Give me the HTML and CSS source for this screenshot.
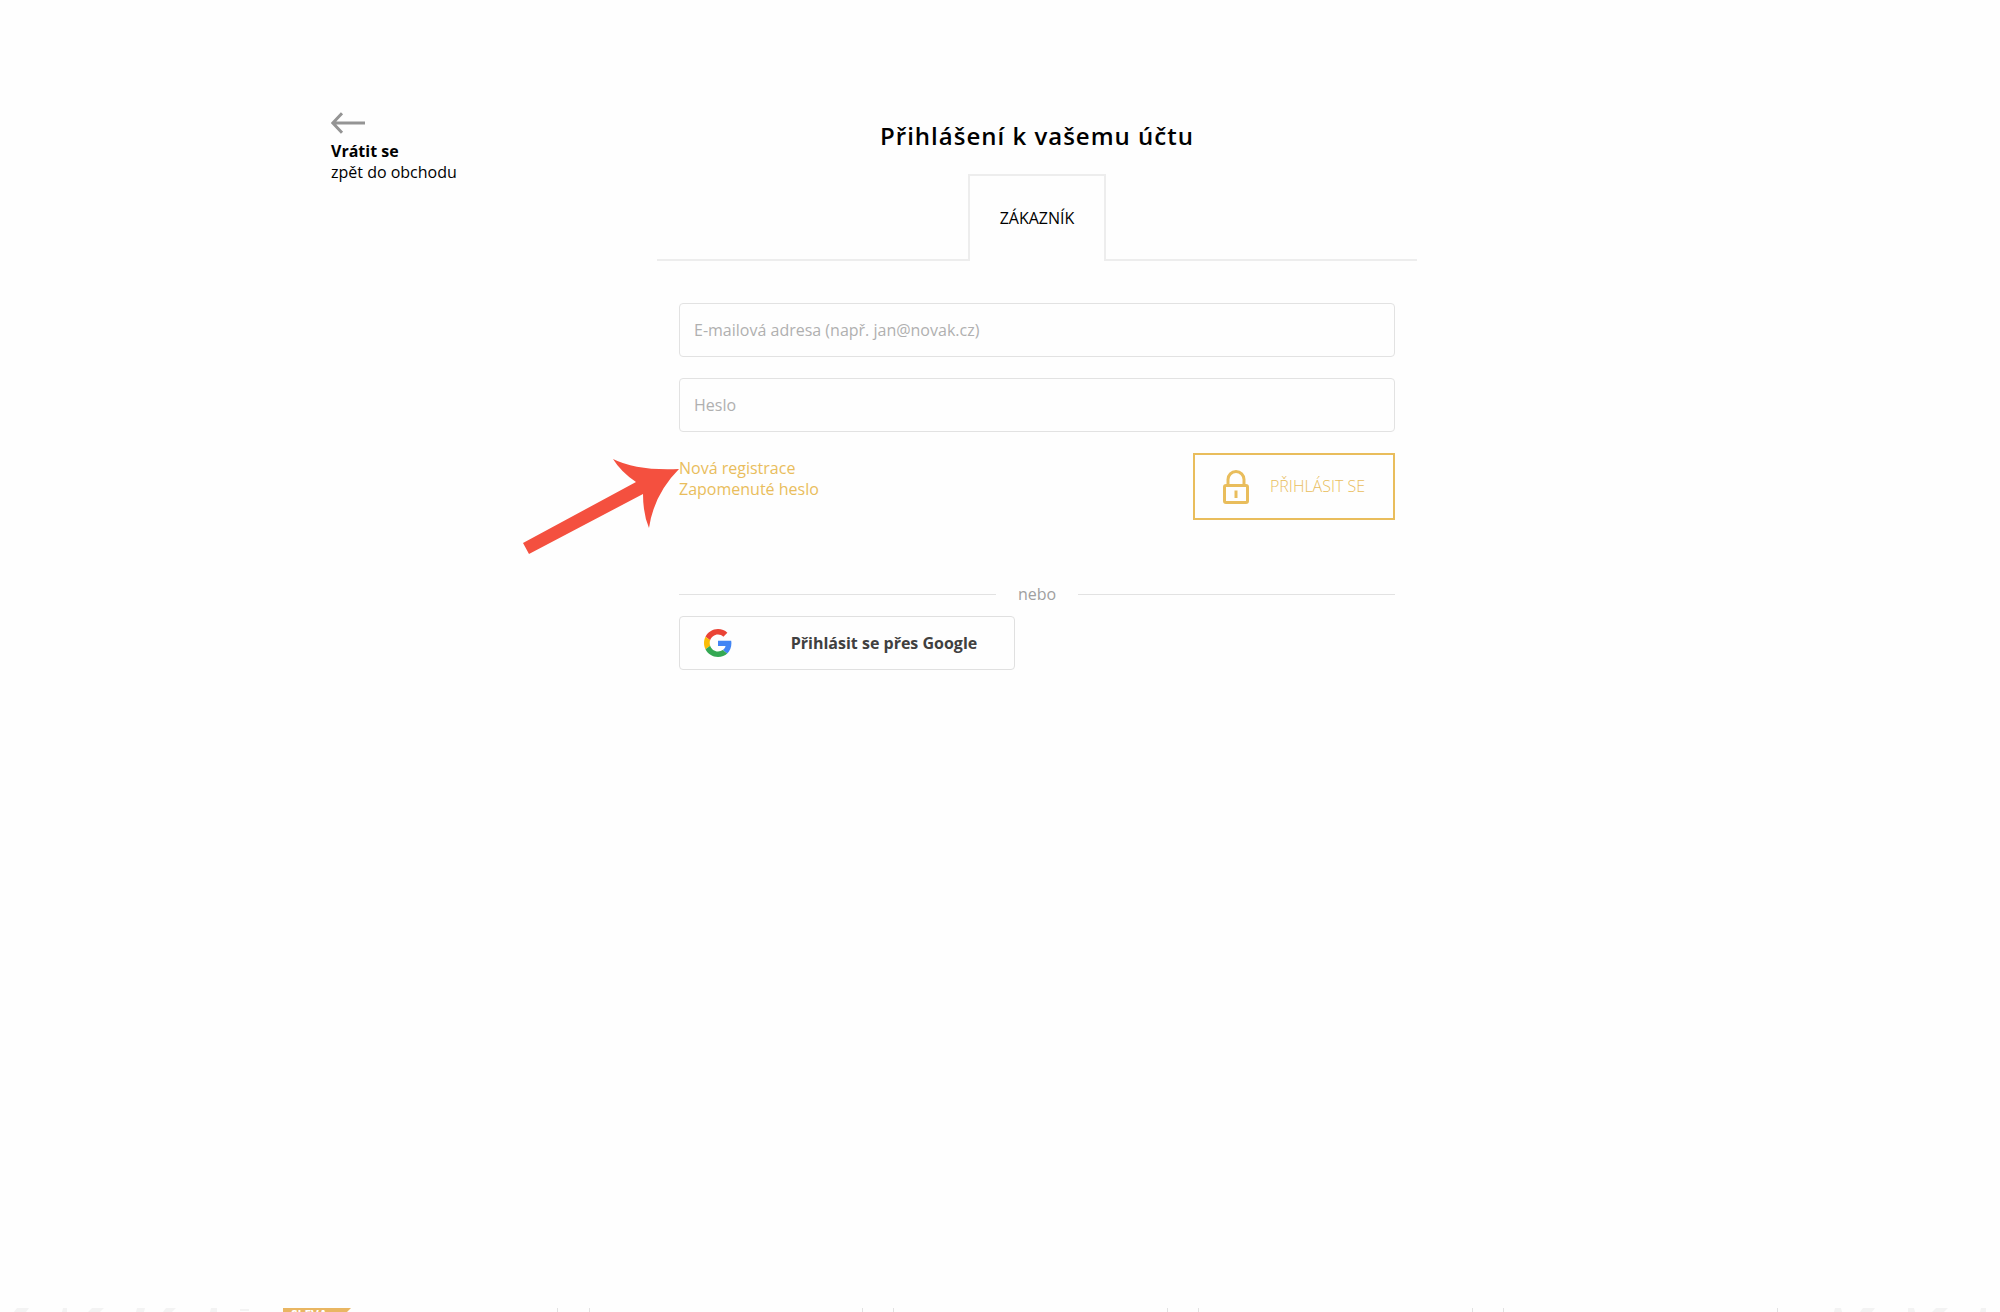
FILE: index.html
```html
<!DOCTYPE html>
<html lang="cs">
<head>
<meta charset="utf-8">
<meta name="viewport" content="width=device-width, initial-scale=1">
<title>Přihlášení k vašemu účtu</title>
<link rel="stylesheet" href="styles.css">
</head>
<body>
<div class="page">
  <a class="back" href="#">
    <svg class="back-icon" width="34" height="22" viewBox="0 0 34 22" fill="none" stroke="#949494" stroke-width="3" aria-hidden="true"><path d="M11 1.2 1.8 11 11 20.8M2 11h32"/></svg>
    <strong>Vrátit se</strong>
    <span>zpět do obchodu</span>
  </a>
  <main class="login">
    <h1 class="title">Přihlášení k vašemu účtu</h1>
    <div class="tabs">
      <button class="tab" type="button">ZÁKAZNÍK</button>
    </div>
    <form class="form">
      <input class="field" type="email" aria-label="E-mailová adresa" placeholder="E-mailová adresa (např. jan@novak.cz)">
      <input class="field" type="password" aria-label="Heslo" placeholder="Heslo">
      <div class="actions">
        <div class="links">
          <a href="#">Nová registrace</a>
          <a href="#">Zapomenuté heslo</a>
          <svg class="pointer" width="158" height="98" viewBox="0 0 158 98" fill="#f4503f" aria-hidden="true"><path d="M91 2Q115 14 157 12Q132 37 127 71Q121 57 121 37L7 97 1 86 114 25Q99 15 91 2Z"/></svg>
        </div>
        <button class="submit" type="submit">
          <svg width="26" height="34" viewBox="0 0 26 34" fill="none" stroke="#e9bd5c" stroke-width="3" aria-hidden="true"><rect x="1.5" y="15.5" width="23" height="17" rx="1.5"/><path d="M5 15.5V9.5a8 8 0 0 1 16 0v6M13 20.5v7.500"/></svg>
          <span>PŘIHLÁSIT SE</span>
        </button>
      </div>
      <div class="divider">nebo</div>
      <button class="google" type="button">
        <svg width="28" height="28" viewBox="0 0 48 48" aria-hidden="true"><path fill="#EA4335" d="M24 9.5c3.54 0 6.71 1.22 9.21 3.6l6.85-6.85C35.9 2.38 30.47 0 24 0 14.62 0 6.51 5.38 2.56 13.22l7.98 6.19C12.43 13.72 17.74 9.5 24 9.5z"/><path fill="#4285F4" d="M46.98 24.55c0-1.57-.15-3.09-.38-4.55H24v9.02h12.94c-.58 2.96-2.26 5.48-4.78 7.18l7.73 6c4.51-4.18 7.09-10.36 7.09-17.65z"/><path fill="#FBBC05" d="M10.53 28.59c-.48-1.45-.76-2.99-.76-4.59s.27-3.14.76-4.59l-7.98-6.19C.92 16.46 0 20.12 0 24c0 3.88.92 7.54 2.56 10.78l7.97-6.19z"/><path fill="#34A853" d="M24 48c6.48 0 11.93-2.13 15.89-5.81l-7.73-6c-2.15 1.45-4.92 2.3-8.16 2.3-6.26 0-11.57-4.22-13.47-9.91l-7.98 6.19C6.51 42.62 14.62 48 24 48z"/></svg>
        <span>Přihlásit se přes Google</span>
      </button>
    </form>
  </main>
</div>
<footer class="strip">
  <svg class="marks" width="260" height="4" viewBox="0 0 260 4" fill="#f3f3f3" aria-hidden="true"><path d="M17 0h12l-3 4H14zM63 0h4v4h-5zM92 0h12l-4 4H88zM137 0h8l-1 4h-8zM166 0h10l-4 4h-9zM211 0h6v4h-7zM240 1h9v2h-9z"/></svg>
  <span class="badge">SLEVA</span>
  <svg class="ticks" viewBox="0 0 1280 4" preserveAspectRatio="xMinYMin slice" fill="#e2e2e2" aria-hidden="true"><path d="M7 0h1v4H7zM39 0h1v4h-1zM312 0h1v4h-1zM343 0h1v4h-1zM617 0h1v4h-1zM648 0h1v4h-1zM922 0h1v4h-1zM953 0h1v4h-1zM1227 0h1v4h-1z"/></svg>
  <svg class="marks" width="170" height="4" viewBox="0 0 170 4" fill="#f3f3f3" aria-hidden="true"><path d="M5 0h6l1 4H4zM33 0h12l-3 4H30zM78 0h6l1 4h-7zM106 0h12l-4 4h-12zM151 0h5v4h-6z"/></svg>
</footer>
</body>
</html>
```
FILE: styles.css
```css
* {
  box-sizing: border-box;
}

body {
  margin: 0;
  min-height: 100vh;
  display: flex;
  flex-direction: column;
  background: #fefefe;
  color: #000;
  font: 16px/21px "Open Sans", "Noto Sans", sans-serif;
}

button,
input {
  font: inherit;
}

a {
  text-decoration: none;
}

.page {
  flex: 1;
  width: 100%;
  max-width: 1338px;
  margin: 0 auto;
  padding-top: 112px;
  display: grid;
  grid-template-columns: 326px minmax(0, 760px);
  align-items: start;
}

.back {
  justify-self: start;
  display: flex;
  flex-direction: column;
  color: #000;
}

.back-icon {
  margin-bottom: 7px;
}

.title {
  margin: 8px 0 22px;
  font-size: 24px;
  font-weight: 600;
  line-height: 32px;
  letter-spacing: 1px;
  text-align: center;
}

.tabs {
  display: flex;
}

.tabs::before,
.tabs::after {
  content: "";
  flex: 1;
  border-bottom: 2px solid #ededed;
}

.tab {
  width: 138px;
  height: 87px;
  padding: 0;
  border: 2px solid #ededed;
  border-bottom: 0;
  background: none;
  color: #000;
}

.form {
  display: flex;
  flex-direction: column;
  gap: 21px;
  padding: 42px 22px;
}

.field {
  width: 100%;
  height: 54px;
  padding: 0 14px;
  border: 1px solid #e2e2e2;
  border-radius: 4px;
  background: none;
}

.field::placeholder {
  color: #b0b0b0;
  opacity: 1;
}

.actions {
  display: flex;
  justify-content: space-between;
  align-items: flex-start;
}

.links {
  position: relative;
  display: flex;
  flex-direction: column;
  padding-top: 5px;
}

.links a {
  color: #e9bd5c;
}

.pointer {
  position: absolute;
  top: 4px;
  right: 100%;
  margin-right: -1px;
}

.submit {
  width: 202px;
  height: 67px;
  display: flex;
  align-items: center;
  gap: 21px;
  padding: 0 20px 0 28px;
  border: 2px solid #e9bd5c;
  background: none;
  color: #e9bd5c;
  font-weight: 300;
  white-space: nowrap;
}

.divider {
  display: flex;
  align-items: center;
  gap: 22px;
  margin-top: 43px;
  margin-bottom: -10px;
  color: #a0a0a0;
}

.divider::before,
.divider::after {
  content: "";
  flex: 1;
  border-top: 1px solid #e2e2e2;
}

.google {
  width: 336px;
  height: 54px;
  display: flex;
  align-items: center;
  padding: 0 24px;
  border: 1px solid #e0e0e0;
  border-radius: 4px;
  background: none;
  color: #404040;
  font-weight: 700;
}

.google span {
  flex: 1;
  padding-left: 46px;
}

.strip {
  height: 4px;
  display: flex;
  overflow: hidden;
}

.marks {
  flex: none;
}

.badge {
  flex: none;
  width: 68px;
  margin: 0 199px 0 23px;
  padding-left: 8px;
  background: #e9b662;
  clip-path: polygon(0 0, 100% 0, 64px 4px, 0 4px);
  color: #fff;
  font-size: 12px;
  font-weight: 700;
  line-height: 13px;
}

.ticks {
  flex: 1;
  min-width: 0;
  height: 4px;
}
```
